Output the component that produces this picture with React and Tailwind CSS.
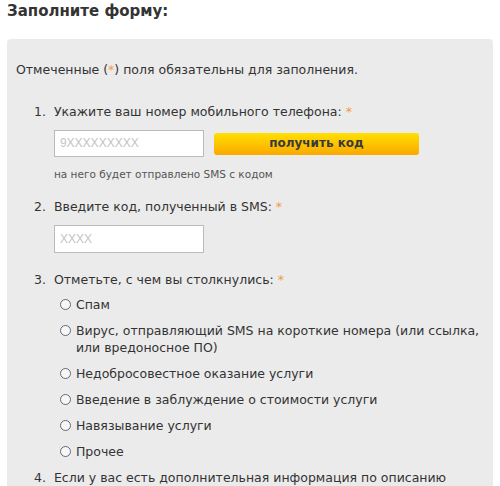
import React from "react";

const Star = () => <span className="text-[#f39a4e]">*</span>;

const Radio = ({ children }) => (
  <label className="flex items-start gap-[5px]">
    <span className="mt-[3px] w-[11px] h-[11px] rounded-full border border-[#5d6b7a] bg-[#f7f7f7] shrink-0" />
    <span>{children}</span>
  </label>
);

export default function App() {
  const options = [
    "Спам",
    "Вирус, отправляющий SMS на короткие номера (или ссылка, или вредоносное ПО)",
    "Недобросовестное оказание услуги",
    "Введение в заблуждение о стоимости услуги",
    "Навязывание услуги",
    "Прочее",
  ];

  return (
    <div className="w-[500px] h-[486px] overflow-hidden bg-white text-[#333] font-['DejaVu_Sans',Verdana,sans-serif] text-[12.5px] leading-[17px]">
      <h1 className="pl-[7px] pt-0 text-[15px] leading-[22px] font-bold text-[#333]">
        Заполните форму:
      </h1>
      <div className="mt-[17px] mx-[7px] rounded-[4px] bg-[#ebebeb] px-[9px] pt-[22px] pb-6">
        <p>
          Отмеченные (<Star />) поля обязательны для заполнения.
        </p>

        <ol className="mt-[25px] pl-[18px] flex flex-col">
          <li className="flex gap-[8px]">
            <span>1.</span>
            <div className="flex flex-col">
              <span>
                Укажите ваш номер мобильного телефона: <Star />
              </span>
              <div className="mt-[10px] flex items-center gap-[10px]">
                <div className="w-[150px] h-[27px] bg-white border border-[#bbb] px-[5px] flex items-center text-[#c4c4c4] font-['Liberation_Sans',Arial,sans-serif] text-[12px]">
                  9XXXXXXXXX
                </div>
                <button className="w-[205px] h-[22px] rounded-[3px] bg-gradient-to-b from-[#ffe000] to-[#f9a800] font-bold text-[#3a3a3a] text-[12px]">
                  получить код
                </button>
              </div>
              <span className="mt-[9px] text-[10.5px] text-[#555]">
                на него будет отправлено SMS с кодом
              </span>
            </div>
          </li>

          <li className="mt-[15px] flex gap-[8px]">
            <span>2.</span>
            <div className="flex flex-col">
              <span>
                Введите код, полученный в SMS: <Star />
              </span>
              <div className="mt-[10px] w-[150px] h-[28px] bg-white border border-[#bbb] px-[5px] flex items-center text-[#c4c4c4] font-['Liberation_Sans',Arial,sans-serif] text-[12px]">
                XXXX
              </div>
            </div>
          </li>

          <li className="mt-[18px] flex gap-[8px]">
            <span>3.</span>
            <div className="flex flex-col">
              <span>
                Отметьте, с чем вы столкнулись: <Star />
              </span>
              <div className="mt-[8px] pl-[6px] flex flex-col gap-[9px]">
                {options.map((o) => (
                  <Radio key={o}>{o}</Radio>
                ))}
              </div>
            </div>
          </li>

          <li className="mt-[9px] flex gap-[8px]">
            <span>4.</span>
            <span>Если у вас есть дополнительная информация по описанию</span>
          </li>
        </ol>
      </div>
    </div>
  );
}
